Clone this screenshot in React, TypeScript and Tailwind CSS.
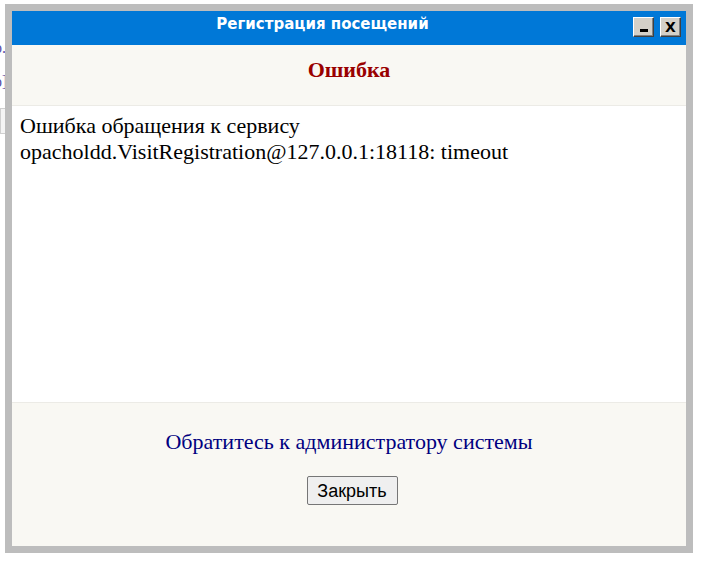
import React from "react";

const serif = { fontFamily: '"Liberation Serif", "Times New Roman", serif' };

function TitleButton({ children }: { children: React.ReactNode }) {
  return (
    <button
      type="button"
      className="w-[21px] h-[20px] flex items-center justify-center bg-[#d4d0c8] border border-t-white border-l-white border-r-[#404040] border-b-[#404040] shadow-[inset_-1px_-1px_0_#808080] text-black font-bold text-[14px] leading-none p-0"
      style={{ fontFamily: '"DejaVu Sans", Verdana, sans-serif' }}
    >
      {children}
    </button>
  );
}

export default function App() {
  return (
    <div className="relative w-[712px] h-[567px] bg-white overflow-hidden">
      {/* page underneath the modal, only its left edge peeks out */}
      <div
        className="absolute left-0 top-0 w-[5px] h-[140px] overflow-hidden text-[#5a4fa8] text-[16px]"
        style={serif}
      >
        <div className="absolute left-[-6px] top-[36px]">o.</div>
        <div className="absolute left-[-6px] top-[70px]">p]</div>
        <div className="absolute left-0 top-[108px] w-[10px] h-[26px] border border-[#cfcfcf] bg-[#f4f4f4]" />
      </div>

      <div className="pl-[5px] pt-[4px]">
        <div className="w-[688px] h-[549px] border-[7px] border-[#bdbdbd] flex flex-col bg-[#f9f8f3]">
          {/* title bar */}
          <div className="h-[34px] bg-[#0078d7] flex items-center shrink-0">
            <div
              className="flex-1 text-center text-white font-bold text-[15px] leading-[18px] pb-[8px]"
              style={{ fontFamily: '"DejaVu Sans", Verdana, sans-serif' }}
            >
              Регистрация посещений
            </div>
            <div className="flex gap-[6px] pr-[5px] pb-[3px]">
              <TitleButton>
                <span className="block w-[8px] h-[3px] bg-black mt-[8px]" />
              </TitleButton>
              <TitleButton>X</TitleButton>
            </div>
          </div>

          {/* heading */}
          <div className="h-[61px] shrink-0 border-b border-[#ecebe6] pt-[12px] text-center" style={serif}>
            <div className="text-[22px] leading-[26px] font-bold text-[#990000]">Ошибка</div>
          </div>

          {/* message */}
          <div className="h-[297px] shrink-0 bg-white border-b border-[#ecebe6] pl-[8px] pt-[7px]" style={serif}>
            <div className="text-[22px] leading-[26px] text-black">
              Ошибка обращения к сервису
              <br />
              opacholdd.VisitRegistration@127.0.0.1:18118: timeout
            </div>
          </div>

          {/* footer */}
          <div className="flex-1 flex flex-col items-center pt-[26px]">
            <div className="text-[22px] leading-[26px] text-[#000080]" style={serif}>
              Обратитесь к администратору системы
            </div>
            <button
              type="button"
              className="mt-[21px] ml-[6px] w-[91px] h-[29px] bg-[#efefef] border border-[#767676] rounded-[2px] text-[18px] text-black leading-none"
              style={{ fontFamily: '"Liberation Sans", Arial, sans-serif' }}
            >
              Закрыть
            </button>
          </div>
        </div>
      </div>
    </div>
  );
}
